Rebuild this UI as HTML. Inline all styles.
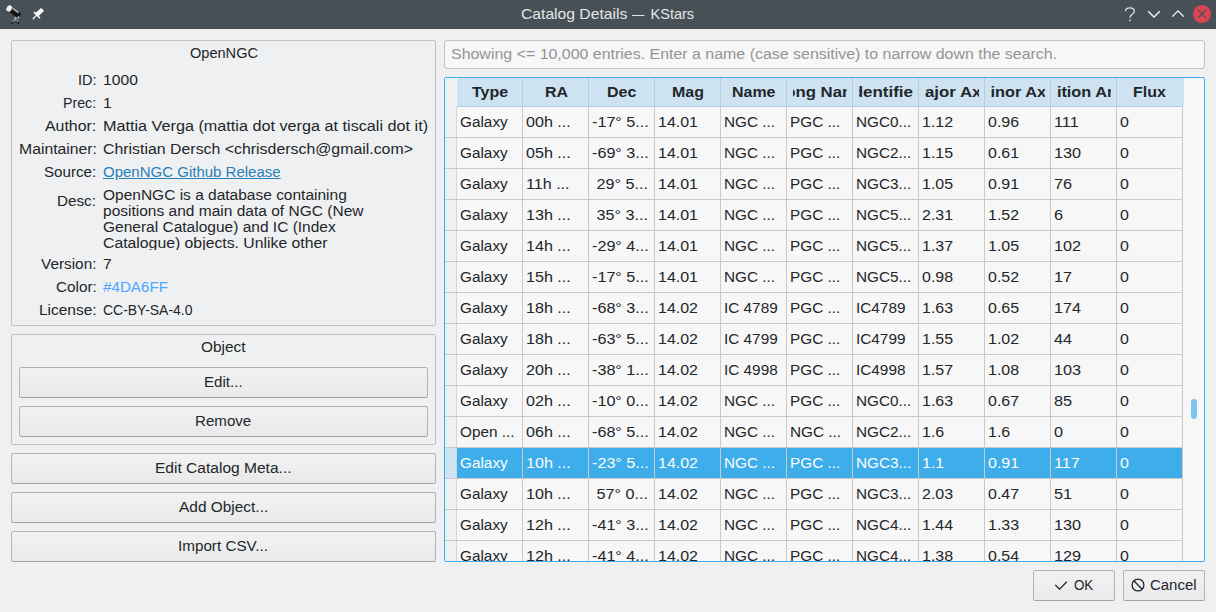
<!DOCTYPE html>
<html><head><meta charset="utf-8"><style>
*{box-sizing:border-box;margin:0;padding:0}
html,body{width:1216px;height:612px;overflow:hidden;background:#eff0f1;font-family:"Liberation Sans",sans-serif;font-size:14px;color:#232629}
.a{position:absolute}
.t{position:absolute;white-space:nowrap;transform-origin:0 0;line-height:16px}
.hc{position:absolute;top:78px;height:28px;overflow:hidden}
.grp{position:absolute;border:1px solid #bfc1c2;border-radius:2px}
.btn{position:absolute;border:1px solid #b0b2b4;border-bottom-color:#a2a4a6;border-radius:2.5px;background:linear-gradient(#f2f2f3,#e8e9ea)}
</style></head><body>
<div class="a" style="left:0;top:0;width:1216px;height:29px;background:#475057"></div>
<div class="a" style="left:0;top:28px;width:1216px;height:1px;background:#40484e"></div>
<svg class="a" style="left:0;top:0" width="60" height="29" viewBox="0 0 60 29">
<g transform="translate(9.2 8.4) rotate(36.5)">
<rect x="0" y="-2.9" width="13" height="5.8" rx="1.8" fill="#141414"/>
<rect x="2" y="-2.9" width="8" height="1.6" fill="#b4b9bd"/>
<ellipse cx="0" cy="0" rx="3.1" ry="4" fill="#ececec" stroke="#1a1a1a" stroke-width="0.7"/>
<circle cx="12.6" cy="1.8" r="0.9" fill="#e0e0e0"/>
</g>
<path d="M15.4 16.8 L12.4 22.5 M15.5 17 L15.5 21.5 M15.6 16.8 L18.4 22.5" stroke="#9aa0a5" stroke-width="1"/>
<rect x="11.2" y="22.3" width="2" height="1.7" fill="#111"/><rect x="17.4" y="22.3" width="2" height="1.7" fill="#111"/><rect x="14.5" y="21.3" width="2" height="1.5" fill="#2a2f33"/>
<polygon points="35.5,12.8 41.1,7.9 44.1,10.8 38.4,16.3" fill="#fcfcfc"/>
<path d="M34.3 12.4 L39.6 17.7" stroke="#fcfcfc" stroke-width="1.5" stroke-linecap="round"/>
<path d="M33.1 18.7 L36.7 15.1" stroke="#fcfcfc" stroke-width="1.3" stroke-linecap="round"/>
</svg>
<svg class="a" style="left:1110px;top:0" width="106" height="29" viewBox="1110 0 106 29">
<path d="M1125.5 11.2 C1125.5 6.8 1134.3 6.8 1134.3 11.2 C1134.3 14.2 1130 14.5 1130 17.8" fill="none" stroke="#dfe1e2" stroke-width="1.3"/><circle cx="1130" cy="20.3" r="0.9" fill="#dfe1e2"/>
<path d="M1148.2 11.3 L1154 17 L1159.8 11.3" fill="none" stroke="#fcfcfc" stroke-width="1.3"/>
<path d="M1172.3 16.6 L1178 10.9 L1183.7 16.6" fill="none" stroke="#fcfcfc" stroke-width="1.3"/>
<circle cx="1202" cy="14" r="9.1" fill="#da4453"/>
<path d="M1197.9 9.9 L1206.1 18.1 M1206.1 9.9 L1197.9 18.1" stroke="#475057" stroke-width="1.1"/>
</svg>
<div class="grp" style="left:11px;top:40px;width:425px;height:286px"></div>
<div class="grp" style="left:11px;top:334px;width:425px;height:111px"></div>
<div class="btn" style="left:19px;top:367px;width:409px;height:31px"></div>
<div class="btn" style="left:19px;top:406px;width:409px;height:31px"></div>
<div class="btn" style="left:11px;top:453px;width:425px;height:31px"></div>
<div class="btn" style="left:11px;top:492px;width:425px;height:31px"></div>
<div class="btn" style="left:11px;top:531px;width:425px;height:31px"></div>
<div class="btn" style="left:1033px;top:570px;width:82px;height:31px"></div>
<div class="btn" style="left:1123px;top:570px;width:82px;height:31px"></div>
<div class="a" style="left:444px;top:40px;width:761px;height:29px;border:1px solid #c1c3c4;border-radius:3px;background:#f7f7f7"></div>
<div class="a" style="left:444px;top:77px;width:761px;height:485px;border:1px solid #3daee9;border-radius:2px;background:#f7f7f7"></div>
<div class="a" style="left:445px;top:78px;width:11px;height:483px;background:#eff0f1"></div>
<div class="a" style="left:457px;top:78px;width:727px;height:28px;background:#cde3f1"></div>
<div class="a" style="left:457px;top:106px;width:726px;height:1px;background:#b7cddb"></div>
<div class="a" style="left:1191px;top:399px;width:6px;height:20px;border-radius:3px;background:#7cc3ee"></div>
<div class="a" style="left:445px;top:78px;width:738px;height:483px;overflow:hidden">
<div class="a" style="left:-445px;top:-78px;width:1216px;height:612px">
<div class="hc" style="left:462px;width:56px"><div class="t" style="left:9.76px;top:6px;transform:scaleX(1.14);font-weight:bold">Type</div></div>
<div class="hc" style="left:528px;width:56px"><div class="t" style="left:16.60px;top:6px;transform:scaleX(1.14);font-weight:bold">RA</div></div>
<div class="a" style="left:522px;top:78px;width:1px;height:28px;background:#b7cddb"></div>
<div class="hc" style="left:594px;width:56px"><div class="t" style="left:13.18px;top:6px;transform:scaleX(1.14);font-weight:bold">Dec</div></div>
<div class="a" style="left:588px;top:78px;width:1px;height:28px;background:#b7cddb"></div>
<div class="hc" style="left:660px;width:56px"><div class="t" style="left:12.04px;top:6px;transform:scaleX(1.14);font-weight:bold">Mag</div></div>
<div class="a" style="left:654px;top:78px;width:1px;height:28px;background:#b7cddb"></div>
<div class="hc" style="left:726px;width:56px"><div class="t" style="left:6.34px;top:6px;transform:scaleX(1.14);font-weight:bold">Name</div></div>
<div class="a" style="left:720px;top:78px;width:1px;height:28px;background:#b7cddb"></div>
<div class="hc" style="left:793px;width:54px"><div class="t" style="left:-18.45px;top:6px;transform:scaleX(1.1961);font-weight:bold">Long Name</div></div>
<div class="a" style="left:786px;top:78px;width:1px;height:28px;background:#b7cddb"></div>
<div class="hc" style="left:859px;width:54px"><div class="t" style="left:-11.24px;top:6px;transform:scaleX(1.2095);font-weight:bold">Identifier</div></div>
<div class="a" style="left:852px;top:78px;width:1px;height:28px;background:#b7cddb"></div>
<div class="hc" style="left:925px;width:54px"><div class="t" style="left:-14.10px;top:6px;transform:scaleX(1.2008);font-weight:bold">Major Axis</div></div>
<div class="a" style="left:918px;top:78px;width:1px;height:28px;background:#b7cddb"></div>
<div class="hc" style="left:991px;width:54px"><div class="t" style="left:-13.87px;top:6px;transform:scaleX(1.1639);font-weight:bold">Minor Axis</div></div>
<div class="a" style="left:984px;top:78px;width:1px;height:28px;background:#b7cddb"></div>
<div class="hc" style="left:1057px;width:54px"><div class="t" style="left:-30.18px;top:6px;transform:scaleX(1.1639);font-weight:bold">Position Angle</div></div>
<div class="a" style="left:1050px;top:78px;width:1px;height:28px;background:#b7cddb"></div>
<div class="hc" style="left:1122px;width:56px"><div class="t" style="left:11.47px;top:6px;transform:scaleX(1.14);font-weight:bold">Flux</div></div>
<div class="a" style="left:1116px;top:78px;width:1px;height:28px;background:#b7cddb"></div>
<div class="t" style="left:459.5px;top:114px;transform:scaleX(1.095);white-space:pre">Galaxy</div>
<div class="t" style="left:525.5px;top:114px;transform:scaleX(1.15);white-space:pre">00h ...</div>
<div class="t" style="left:591.5px;top:114px;transform:scaleX(1.155);white-space:pre">-17° 5...</div>
<div class="t" style="left:657.5px;top:114px;transform:scaleX(1.14);white-space:pre">14.01</div>
<div class="t" style="left:723.5px;top:114px;transform:scaleX(1.095);white-space:pre">NGC ...</div>
<div class="t" style="left:789.5px;top:114px;transform:scaleX(1.095);white-space:pre">PGC ...</div>
<div class="t" style="left:855.5px;top:114px;transform:scaleX(1.095);white-space:pre">NGC0...</div>
<div class="t" style="left:921.5px;top:114px;transform:scaleX(1.14);white-space:pre">1.12</div>
<div class="t" style="left:987.5px;top:114px;transform:scaleX(1.14);white-space:pre">0.96</div>
<div class="t" style="left:1053.5px;top:114px;transform:scaleX(1.16);white-space:pre">111</div>
<div class="t" style="left:1119.5px;top:114px;transform:scaleX(1.14);white-space:pre">0</div>
<div class="t" style="left:459.5px;top:145px;transform:scaleX(1.095);white-space:pre">Galaxy</div>
<div class="t" style="left:525.5px;top:145px;transform:scaleX(1.15);white-space:pre">05h ...</div>
<div class="t" style="left:591.5px;top:145px;transform:scaleX(1.155);white-space:pre">-69° 3...</div>
<div class="t" style="left:657.5px;top:145px;transform:scaleX(1.14);white-space:pre">14.01</div>
<div class="t" style="left:723.5px;top:145px;transform:scaleX(1.095);white-space:pre">NGC ...</div>
<div class="t" style="left:789.5px;top:145px;transform:scaleX(1.095);white-space:pre">PGC ...</div>
<div class="t" style="left:855.5px;top:145px;transform:scaleX(1.095);white-space:pre">NGC2...</div>
<div class="t" style="left:921.5px;top:145px;transform:scaleX(1.14);white-space:pre">1.15</div>
<div class="t" style="left:987.5px;top:145px;transform:scaleX(1.14);white-space:pre">0.61</div>
<div class="t" style="left:1053.5px;top:145px;transform:scaleX(1.16);white-space:pre">130</div>
<div class="t" style="left:1119.5px;top:145px;transform:scaleX(1.14);white-space:pre">0</div>
<div class="t" style="left:459.5px;top:176px;transform:scaleX(1.095);white-space:pre">Galaxy</div>
<div class="t" style="left:525.5px;top:176px;transform:scaleX(1.15);white-space:pre">11h ...</div>
<div class="t" style="left:591.5px;top:176px;transform:scaleX(1.155);white-space:pre"> 29° 5...</div>
<div class="t" style="left:657.5px;top:176px;transform:scaleX(1.14);white-space:pre">14.01</div>
<div class="t" style="left:723.5px;top:176px;transform:scaleX(1.095);white-space:pre">NGC ...</div>
<div class="t" style="left:789.5px;top:176px;transform:scaleX(1.095);white-space:pre">PGC ...</div>
<div class="t" style="left:855.5px;top:176px;transform:scaleX(1.095);white-space:pre">NGC3...</div>
<div class="t" style="left:921.5px;top:176px;transform:scaleX(1.14);white-space:pre">1.05</div>
<div class="t" style="left:987.5px;top:176px;transform:scaleX(1.14);white-space:pre">0.91</div>
<div class="t" style="left:1053.5px;top:176px;transform:scaleX(1.16);white-space:pre">76</div>
<div class="t" style="left:1119.5px;top:176px;transform:scaleX(1.14);white-space:pre">0</div>
<div class="t" style="left:459.5px;top:207px;transform:scaleX(1.095);white-space:pre">Galaxy</div>
<div class="t" style="left:525.5px;top:207px;transform:scaleX(1.15);white-space:pre">13h ...</div>
<div class="t" style="left:591.5px;top:207px;transform:scaleX(1.155);white-space:pre"> 35° 3...</div>
<div class="t" style="left:657.5px;top:207px;transform:scaleX(1.14);white-space:pre">14.01</div>
<div class="t" style="left:723.5px;top:207px;transform:scaleX(1.095);white-space:pre">NGC ...</div>
<div class="t" style="left:789.5px;top:207px;transform:scaleX(1.095);white-space:pre">PGC ...</div>
<div class="t" style="left:855.5px;top:207px;transform:scaleX(1.095);white-space:pre">NGC5...</div>
<div class="t" style="left:921.5px;top:207px;transform:scaleX(1.14);white-space:pre">2.31</div>
<div class="t" style="left:987.5px;top:207px;transform:scaleX(1.14);white-space:pre">1.52</div>
<div class="t" style="left:1053.5px;top:207px;transform:scaleX(1.16);white-space:pre">6</div>
<div class="t" style="left:1119.5px;top:207px;transform:scaleX(1.14);white-space:pre">0</div>
<div class="t" style="left:459.5px;top:238px;transform:scaleX(1.095);white-space:pre">Galaxy</div>
<div class="t" style="left:525.5px;top:238px;transform:scaleX(1.15);white-space:pre">14h ...</div>
<div class="t" style="left:591.5px;top:238px;transform:scaleX(1.155);white-space:pre">-29° 4...</div>
<div class="t" style="left:657.5px;top:238px;transform:scaleX(1.14);white-space:pre">14.01</div>
<div class="t" style="left:723.5px;top:238px;transform:scaleX(1.095);white-space:pre">NGC ...</div>
<div class="t" style="left:789.5px;top:238px;transform:scaleX(1.095);white-space:pre">PGC ...</div>
<div class="t" style="left:855.5px;top:238px;transform:scaleX(1.095);white-space:pre">NGC5...</div>
<div class="t" style="left:921.5px;top:238px;transform:scaleX(1.14);white-space:pre">1.37</div>
<div class="t" style="left:987.5px;top:238px;transform:scaleX(1.14);white-space:pre">1.05</div>
<div class="t" style="left:1053.5px;top:238px;transform:scaleX(1.16);white-space:pre">102</div>
<div class="t" style="left:1119.5px;top:238px;transform:scaleX(1.14);white-space:pre">0</div>
<div class="t" style="left:459.5px;top:269px;transform:scaleX(1.095);white-space:pre">Galaxy</div>
<div class="t" style="left:525.5px;top:269px;transform:scaleX(1.15);white-space:pre">15h ...</div>
<div class="t" style="left:591.5px;top:269px;transform:scaleX(1.155);white-space:pre">-17° 5...</div>
<div class="t" style="left:657.5px;top:269px;transform:scaleX(1.14);white-space:pre">14.01</div>
<div class="t" style="left:723.5px;top:269px;transform:scaleX(1.095);white-space:pre">NGC ...</div>
<div class="t" style="left:789.5px;top:269px;transform:scaleX(1.095);white-space:pre">PGC ...</div>
<div class="t" style="left:855.5px;top:269px;transform:scaleX(1.095);white-space:pre">NGC5...</div>
<div class="t" style="left:921.5px;top:269px;transform:scaleX(1.14);white-space:pre">0.98</div>
<div class="t" style="left:987.5px;top:269px;transform:scaleX(1.14);white-space:pre">0.52</div>
<div class="t" style="left:1053.5px;top:269px;transform:scaleX(1.16);white-space:pre">17</div>
<div class="t" style="left:1119.5px;top:269px;transform:scaleX(1.14);white-space:pre">0</div>
<div class="t" style="left:459.5px;top:300px;transform:scaleX(1.095);white-space:pre">Galaxy</div>
<div class="t" style="left:525.5px;top:300px;transform:scaleX(1.15);white-space:pre">18h ...</div>
<div class="t" style="left:591.5px;top:300px;transform:scaleX(1.155);white-space:pre">-68° 3...</div>
<div class="t" style="left:657.5px;top:300px;transform:scaleX(1.14);white-space:pre">14.02</div>
<div class="t" style="left:723.5px;top:300px;transform:scaleX(1.095);white-space:pre">IC 4789</div>
<div class="t" style="left:789.5px;top:300px;transform:scaleX(1.095);white-space:pre">PGC ...</div>
<div class="t" style="left:855.5px;top:300px;transform:scaleX(1.095);white-space:pre">IC4789</div>
<div class="t" style="left:921.5px;top:300px;transform:scaleX(1.14);white-space:pre">1.63</div>
<div class="t" style="left:987.5px;top:300px;transform:scaleX(1.14);white-space:pre">0.65</div>
<div class="t" style="left:1053.5px;top:300px;transform:scaleX(1.16);white-space:pre">174</div>
<div class="t" style="left:1119.5px;top:300px;transform:scaleX(1.14);white-space:pre">0</div>
<div class="t" style="left:459.5px;top:331px;transform:scaleX(1.095);white-space:pre">Galaxy</div>
<div class="t" style="left:525.5px;top:331px;transform:scaleX(1.15);white-space:pre">18h ...</div>
<div class="t" style="left:591.5px;top:331px;transform:scaleX(1.155);white-space:pre">-63° 5...</div>
<div class="t" style="left:657.5px;top:331px;transform:scaleX(1.14);white-space:pre">14.02</div>
<div class="t" style="left:723.5px;top:331px;transform:scaleX(1.095);white-space:pre">IC 4799</div>
<div class="t" style="left:789.5px;top:331px;transform:scaleX(1.095);white-space:pre">PGC ...</div>
<div class="t" style="left:855.5px;top:331px;transform:scaleX(1.095);white-space:pre">IC4799</div>
<div class="t" style="left:921.5px;top:331px;transform:scaleX(1.14);white-space:pre">1.55</div>
<div class="t" style="left:987.5px;top:331px;transform:scaleX(1.14);white-space:pre">1.02</div>
<div class="t" style="left:1053.5px;top:331px;transform:scaleX(1.16);white-space:pre">44</div>
<div class="t" style="left:1119.5px;top:331px;transform:scaleX(1.14);white-space:pre">0</div>
<div class="t" style="left:459.5px;top:362px;transform:scaleX(1.095);white-space:pre">Galaxy</div>
<div class="t" style="left:525.5px;top:362px;transform:scaleX(1.15);white-space:pre">20h ...</div>
<div class="t" style="left:591.5px;top:362px;transform:scaleX(1.155);white-space:pre">-38° 1...</div>
<div class="t" style="left:657.5px;top:362px;transform:scaleX(1.14);white-space:pre">14.02</div>
<div class="t" style="left:723.5px;top:362px;transform:scaleX(1.095);white-space:pre">IC 4998</div>
<div class="t" style="left:789.5px;top:362px;transform:scaleX(1.095);white-space:pre">PGC ...</div>
<div class="t" style="left:855.5px;top:362px;transform:scaleX(1.095);white-space:pre">IC4998</div>
<div class="t" style="left:921.5px;top:362px;transform:scaleX(1.14);white-space:pre">1.57</div>
<div class="t" style="left:987.5px;top:362px;transform:scaleX(1.14);white-space:pre">1.08</div>
<div class="t" style="left:1053.5px;top:362px;transform:scaleX(1.16);white-space:pre">103</div>
<div class="t" style="left:1119.5px;top:362px;transform:scaleX(1.14);white-space:pre">0</div>
<div class="t" style="left:459.5px;top:393px;transform:scaleX(1.095);white-space:pre">Galaxy</div>
<div class="t" style="left:525.5px;top:393px;transform:scaleX(1.15);white-space:pre">02h ...</div>
<div class="t" style="left:591.5px;top:393px;transform:scaleX(1.155);white-space:pre">-10° 0...</div>
<div class="t" style="left:657.5px;top:393px;transform:scaleX(1.14);white-space:pre">14.02</div>
<div class="t" style="left:723.5px;top:393px;transform:scaleX(1.095);white-space:pre">NGC ...</div>
<div class="t" style="left:789.5px;top:393px;transform:scaleX(1.095);white-space:pre">PGC ...</div>
<div class="t" style="left:855.5px;top:393px;transform:scaleX(1.095);white-space:pre">NGC0...</div>
<div class="t" style="left:921.5px;top:393px;transform:scaleX(1.14);white-space:pre">1.63</div>
<div class="t" style="left:987.5px;top:393px;transform:scaleX(1.14);white-space:pre">0.67</div>
<div class="t" style="left:1053.5px;top:393px;transform:scaleX(1.16);white-space:pre">85</div>
<div class="t" style="left:1119.5px;top:393px;transform:scaleX(1.14);white-space:pre">0</div>
<div class="t" style="left:459.5px;top:424px;transform:scaleX(1.095);white-space:pre">Open ...</div>
<div class="t" style="left:525.5px;top:424px;transform:scaleX(1.15);white-space:pre">06h ...</div>
<div class="t" style="left:591.5px;top:424px;transform:scaleX(1.155);white-space:pre">-68° 5...</div>
<div class="t" style="left:657.5px;top:424px;transform:scaleX(1.14);white-space:pre">14.02</div>
<div class="t" style="left:723.5px;top:424px;transform:scaleX(1.095);white-space:pre">NGC ...</div>
<div class="t" style="left:789.5px;top:424px;transform:scaleX(1.095);white-space:pre">NGC ...</div>
<div class="t" style="left:855.5px;top:424px;transform:scaleX(1.095);white-space:pre">NGC2...</div>
<div class="t" style="left:921.5px;top:424px;transform:scaleX(1.14);white-space:pre">1.6</div>
<div class="t" style="left:987.5px;top:424px;transform:scaleX(1.14);white-space:pre">1.6</div>
<div class="t" style="left:1053.5px;top:424px;transform:scaleX(1.16);white-space:pre">0</div>
<div class="t" style="left:1119.5px;top:424px;transform:scaleX(1.14);white-space:pre">0</div>
<div class="a" style="left:457px;top:448px;width:726px;height:30px;background:#3daee9"></div>
<div class="a" style="left:445px;top:448px;width:11px;height:30px;background:#cde3f1"></div>
<div class="t" style="left:459.5px;top:455px;transform:scaleX(1.095);color:#fcfcfc;white-space:pre">Galaxy</div>
<div class="t" style="left:525.5px;top:455px;transform:scaleX(1.15);color:#fcfcfc;white-space:pre">10h ...</div>
<div class="t" style="left:591.5px;top:455px;transform:scaleX(1.155);color:#fcfcfc;white-space:pre">-23° 5...</div>
<div class="t" style="left:657.5px;top:455px;transform:scaleX(1.14);color:#fcfcfc;white-space:pre">14.02</div>
<div class="t" style="left:723.5px;top:455px;transform:scaleX(1.095);color:#fcfcfc;white-space:pre">NGC ...</div>
<div class="t" style="left:789.5px;top:455px;transform:scaleX(1.095);color:#fcfcfc;white-space:pre">PGC ...</div>
<div class="t" style="left:855.5px;top:455px;transform:scaleX(1.095);color:#fcfcfc;white-space:pre">NGC3...</div>
<div class="t" style="left:921.5px;top:455px;transform:scaleX(1.14);color:#fcfcfc;white-space:pre">1.1</div>
<div class="t" style="left:987.5px;top:455px;transform:scaleX(1.14);color:#fcfcfc;white-space:pre">0.91</div>
<div class="t" style="left:1053.5px;top:455px;transform:scaleX(1.16);color:#fcfcfc;white-space:pre">117</div>
<div class="t" style="left:1119.5px;top:455px;transform:scaleX(1.14);color:#fcfcfc;white-space:pre">0</div>
<div class="t" style="left:459.5px;top:486px;transform:scaleX(1.095);white-space:pre">Galaxy</div>
<div class="t" style="left:525.5px;top:486px;transform:scaleX(1.15);white-space:pre">10h ...</div>
<div class="t" style="left:591.5px;top:486px;transform:scaleX(1.155);white-space:pre"> 57° 0...</div>
<div class="t" style="left:657.5px;top:486px;transform:scaleX(1.14);white-space:pre">14.02</div>
<div class="t" style="left:723.5px;top:486px;transform:scaleX(1.095);white-space:pre">NGC ...</div>
<div class="t" style="left:789.5px;top:486px;transform:scaleX(1.095);white-space:pre">PGC ...</div>
<div class="t" style="left:855.5px;top:486px;transform:scaleX(1.095);white-space:pre">NGC3...</div>
<div class="t" style="left:921.5px;top:486px;transform:scaleX(1.14);white-space:pre">2.03</div>
<div class="t" style="left:987.5px;top:486px;transform:scaleX(1.14);white-space:pre">0.47</div>
<div class="t" style="left:1053.5px;top:486px;transform:scaleX(1.16);white-space:pre">51</div>
<div class="t" style="left:1119.5px;top:486px;transform:scaleX(1.14);white-space:pre">0</div>
<div class="t" style="left:459.5px;top:517px;transform:scaleX(1.095);white-space:pre">Galaxy</div>
<div class="t" style="left:525.5px;top:517px;transform:scaleX(1.15);white-space:pre">12h ...</div>
<div class="t" style="left:591.5px;top:517px;transform:scaleX(1.155);white-space:pre">-41° 3...</div>
<div class="t" style="left:657.5px;top:517px;transform:scaleX(1.14);white-space:pre">14.02</div>
<div class="t" style="left:723.5px;top:517px;transform:scaleX(1.095);white-space:pre">NGC ...</div>
<div class="t" style="left:789.5px;top:517px;transform:scaleX(1.095);white-space:pre">PGC ...</div>
<div class="t" style="left:855.5px;top:517px;transform:scaleX(1.095);white-space:pre">NGC4...</div>
<div class="t" style="left:921.5px;top:517px;transform:scaleX(1.14);white-space:pre">1.44</div>
<div class="t" style="left:987.5px;top:517px;transform:scaleX(1.14);white-space:pre">1.33</div>
<div class="t" style="left:1053.5px;top:517px;transform:scaleX(1.16);white-space:pre">130</div>
<div class="t" style="left:1119.5px;top:517px;transform:scaleX(1.14);white-space:pre">0</div>
<div class="t" style="left:459.5px;top:548px;transform:scaleX(1.095);white-space:pre">Galaxy</div>
<div class="t" style="left:525.5px;top:548px;transform:scaleX(1.15);white-space:pre">12h ...</div>
<div class="t" style="left:591.5px;top:548px;transform:scaleX(1.155);white-space:pre">-41° 4...</div>
<div class="t" style="left:657.5px;top:548px;transform:scaleX(1.14);white-space:pre">14.02</div>
<div class="t" style="left:723.5px;top:548px;transform:scaleX(1.095);white-space:pre">NGC ...</div>
<div class="t" style="left:789.5px;top:548px;transform:scaleX(1.095);white-space:pre">PGC ...</div>
<div class="t" style="left:855.5px;top:548px;transform:scaleX(1.095);white-space:pre">NGC4...</div>
<div class="t" style="left:921.5px;top:548px;transform:scaleX(1.14);white-space:pre">1.38</div>
<div class="t" style="left:987.5px;top:548px;transform:scaleX(1.14);white-space:pre">0.54</div>
<div class="t" style="left:1053.5px;top:548px;transform:scaleX(1.16);white-space:pre">129</div>
<div class="t" style="left:1119.5px;top:548px;transform:scaleX(1.14);white-space:pre">0</div>
<div class="a" style="left:456px;top:107px;width:1px;height:454px;background:#d3d5d6"></div>
<div class="a" style="left:522px;top:107px;width:1px;height:454px;background:#c8cacc"></div>
<div class="a" style="left:588px;top:107px;width:1px;height:454px;background:#c8cacc"></div>
<div class="a" style="left:654px;top:107px;width:1px;height:454px;background:#c8cacc"></div>
<div class="a" style="left:720px;top:107px;width:1px;height:454px;background:#c8cacc"></div>
<div class="a" style="left:786px;top:107px;width:1px;height:454px;background:#c8cacc"></div>
<div class="a" style="left:852px;top:107px;width:1px;height:454px;background:#c8cacc"></div>
<div class="a" style="left:918px;top:107px;width:1px;height:454px;background:#c8cacc"></div>
<div class="a" style="left:984px;top:107px;width:1px;height:454px;background:#c8cacc"></div>
<div class="a" style="left:1050px;top:107px;width:1px;height:454px;background:#c8cacc"></div>
<div class="a" style="left:1116px;top:107px;width:1px;height:454px;background:#c8cacc"></div>
<div class="a" style="left:1182px;top:107px;width:1px;height:454px;background:#c8cacc"></div>
<div class="a" style="left:445px;top:137px;width:738px;height:1px;background:#c8cacc"></div>
<div class="a" style="left:445px;top:168px;width:738px;height:1px;background:#c8cacc"></div>
<div class="a" style="left:445px;top:199px;width:738px;height:1px;background:#c8cacc"></div>
<div class="a" style="left:445px;top:230px;width:738px;height:1px;background:#c8cacc"></div>
<div class="a" style="left:445px;top:261px;width:738px;height:1px;background:#c8cacc"></div>
<div class="a" style="left:445px;top:292px;width:738px;height:1px;background:#c8cacc"></div>
<div class="a" style="left:445px;top:323px;width:738px;height:1px;background:#c8cacc"></div>
<div class="a" style="left:445px;top:354px;width:738px;height:1px;background:#c8cacc"></div>
<div class="a" style="left:445px;top:385px;width:738px;height:1px;background:#c8cacc"></div>
<div class="a" style="left:445px;top:416px;width:738px;height:1px;background:#c8cacc"></div>
<div class="a" style="left:445px;top:447px;width:738px;height:1px;background:#c8cacc"></div>
<div class="a" style="left:445px;top:478px;width:738px;height:1px;background:#c8cacc"></div>
<div class="a" style="left:445px;top:509px;width:738px;height:1px;background:#c8cacc"></div>
<div class="a" style="left:445px;top:540px;width:738px;height:1px;background:#c8cacc"></div>
</div></div>
<svg class="a" style="left:1050px;top:575px" width="150" height="22" viewBox="1050 575 150 22">
<path d="M1055.3 585 L1059.6 589.2 L1066.8 581.8" fill="none" stroke="#232629" stroke-width="1.3"/>
<circle cx="1138" cy="585" r="5.9" fill="none" stroke="#232629" stroke-width="1.3"/><path d="M1133.8 580.8 L1142.2 589.2" stroke="#232629" stroke-width="1.3"/>
</svg>
<div class="t" style="left:189.70px;top:45.00px;transform:scaleX(1.0400);">OpenNGC</div>
<div class="t" style="left:77.70px;top:72.00px;transform:scaleX(1.0389);">ID:</div>
<div class="t" style="left:62.90px;top:95.00px;transform:scaleX(1.0152);">Prec:</div>
<div class="t" style="left:45.30px;top:118.00px;transform:scaleX(1.1356);">Author:</div>
<div class="t" style="left:18.70px;top:141.00px;transform:scaleX(1.1261);">Maintainer:</div>
<div class="t" style="left:44.40px;top:164.00px;transform:scaleX(1.0833);">Source:</div>
<div class="t" style="left:57.20px;top:193.00px;transform:scaleX(1.0889);">Desc:</div>
<div class="t" style="left:40.50px;top:256.00px;transform:scaleX(1.0961);">Version:</div>
<div class="t" style="left:56.00px;top:279.00px;transform:scaleX(1.0919);">Color:</div>
<div class="t" style="left:39.00px;top:302.00px;transform:scaleX(1.1038);">License:</div>
<div class="t" style="left:103.20px;top:72.00px;transform:scaleX(1.1200);">1000</div>
<div class="t" style="left:103.20px;top:95.00px;transform:scaleX(1.1200);">1</div>
<div class="t" style="left:102.60px;top:118.00px;transform:scaleX(1.1573);">Mattia Verga (mattia dot verga at tiscali dot it)</div>
<div class="t" style="left:103.10px;top:141.00px;transform:scaleX(1.1341);">Christian Dersch &lt;chrisdersch@gmail.com&gt;</div>
<div class="t" style="left:103.10px;top:164.00px;transform:scaleX(1.0717);color:#2980b9;text-decoration:underline;">OpenNGC Github Release</div>
<div class="a" style="left:100px;top:185px;width:300px;height:65px;overflow:hidden"><div class="a" style="left:-100px;top:-185px;width:1216px;height:612px">
<div class="t" style="left:103.10px;top:187.00px;transform:scaleX(1.1068);">OpenNGC is a database containing</div>
<div class="t" style="left:103.10px;top:203.00px;transform:scaleX(1.1085);">positions and main data of NGC (New</div>
<div class="t" style="left:103.10px;top:219.00px;transform:scaleX(1.1076);">General Catalogue) and IC (Index</div>
<div class="t" style="left:103.10px;top:235.00px;transform:scaleX(1.1271);">Catalogue) objects. Unlike other</div>
</div></div>
<div class="t" style="left:103.20px;top:256.00px;transform:scaleX(1.1200);">7</div>
<div class="t" style="left:103.10px;top:279.00px;transform:scaleX(1.0850);color:#4da6ff;">#4DA6FF</div>
<div class="t" style="left:103.10px;top:302.00px;transform:scaleX(0.9967);">CC-BY-SA-4.0</div>
<div class="t" style="left:200.90px;top:339.00px;transform:scaleX(1.1000);">Object</div>
<div class="t" style="left:203.80px;top:374.00px;transform:scaleX(1.0778);">Edit...</div>
<div class="t" style="left:195.40px;top:413.00px;transform:scaleX(1.0788);">Remove</div>
<div class="t" style="left:155.00px;top:460.00px;transform:scaleX(1.1106);">Edit Catalog Meta...</div>
<div class="t" style="left:178.50px;top:499.00px;transform:scaleX(1.1025);">Add Object...</div>
<div class="t" style="left:178.00px;top:538.00px;transform:scaleX(1.0880);">Import CSV...</div>
<div class="t" style="left:451.20px;top:46.00px;transform:scaleX(1.1387);color:#929496;">Showing &lt;= 10,000 entries. Enter a name (case sensitive) to narrow down the search.</div>
<div class="t" style="left:520.80px;top:6.00px;transform:scaleX(1.0806);color:#e3e5e6;font-size:14.5px;">Catalog Details</div>
<div class="t" style="left:632.10px;top:6.00px;transform:scaleX(0.8467);color:#e3e5e6;font-size:14.5px;">—</div>
<div class="t" style="left:650.60px;top:6.00px;transform:scaleX(1.0000);color:#e3e5e6;font-size:14.5px;">KStars</div>
<div class="t" style="left:1074.00px;top:577.00px;transform:scaleX(0.9524);">OK</div>
<div class="t" style="left:1150.00px;top:577.00px;transform:scaleX(1.0682);">Cancel</div>
</body></html>
